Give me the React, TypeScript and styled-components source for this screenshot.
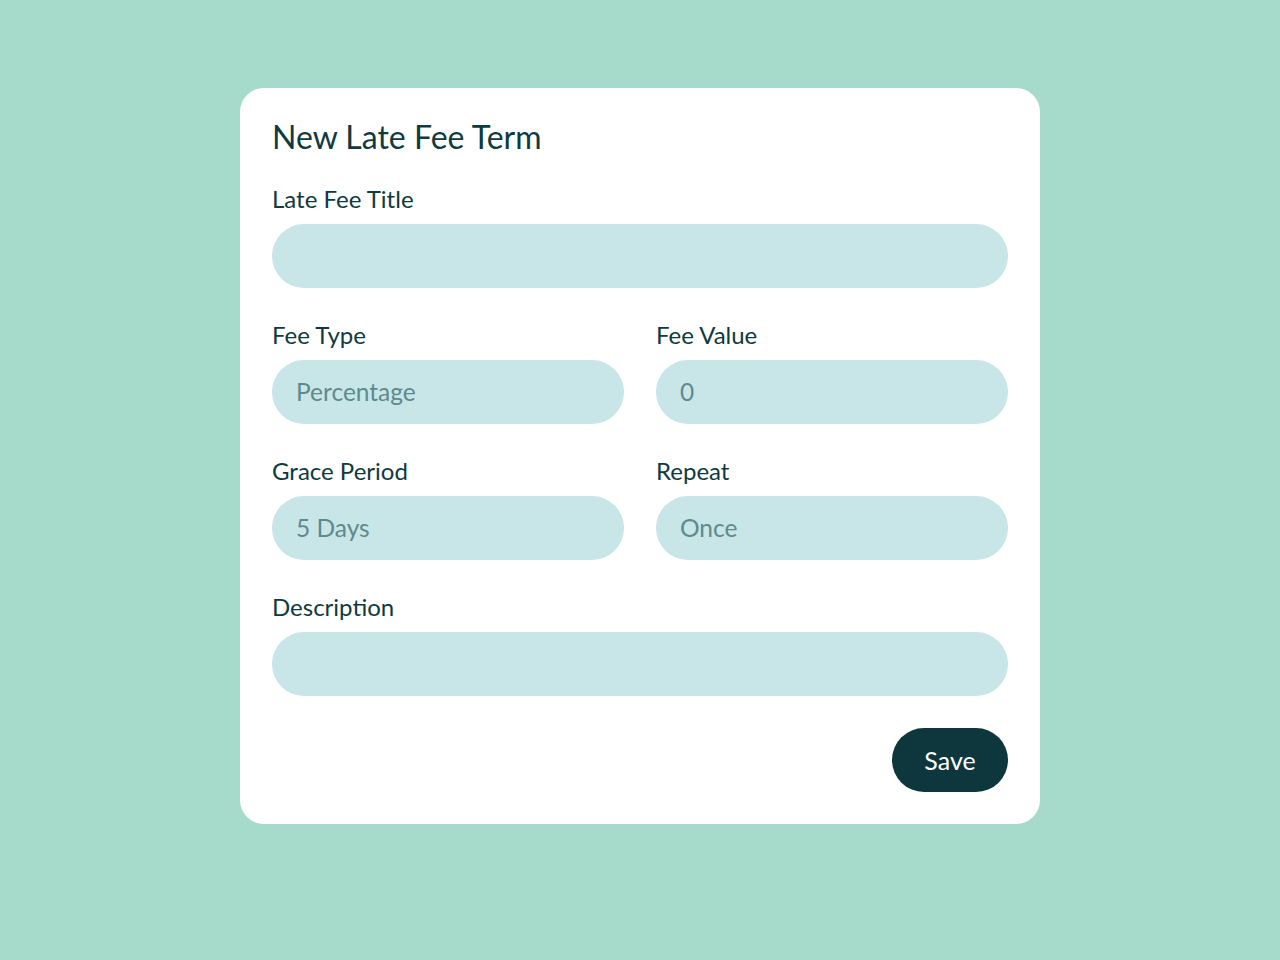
import styled, { createGlobalStyle } from 'styled-components';

const Global = createGlobalStyle`
  html, body {
    margin: 0;
    padding: 0;
    background: #a6dbcc;
    font-family: 'Lato', 'Noto Sans', sans-serif;
  }
`;

const Page = styled.div`
  min-height: 960px;
  display: flex;
  justify-content: center;
  padding-top: 88px;
  box-sizing: border-box;
`;

const Card = styled.div`
  width: 800px;
  height: 736px;
  box-sizing: border-box;
  background: #fff;
  border-radius: 24px;
  padding: 32px;
  color: #0f3a40;
`;

const Title = styled.h1`
  margin: 0 0 35px;
  font-size: 32px;
  font-weight: 400;
  line-height: 33px;
`;

const Form = styled.div`
  display: grid;
  grid-template-columns: 1fr 1fr;
  column-gap: 32px;
  row-gap: 36px;
`;

const Field = styled.label<{ $wide?: boolean }>`
  display: flex;
  flex-direction: column;
  gap: 12px;
  grid-column: ${(p) => (p.$wide ? '1 / -1' : 'auto')};
`;

const Label = styled.span`
  font-size: 24px;
  line-height: 22px;
  padding-bottom: 2px;
`;

const Input = styled.div`
  height: 64px;
  border-radius: 32px;
  background: #c8e5e8;
  padding: 0 24px 2px;
  box-sizing: border-box;
  display: flex;
  align-items: center;
  font-size: 24.5px;
  color: #5e8a8c;
`;

const Actions = styled.div`
  display: flex;
  justify-content: flex-end;
  margin-top: 32px;
`;

const SaveButton = styled.button`
  height: 64px;
  width: 116px;
  border: none;
  border-radius: 32px;
  padding-bottom: 2px;
  background: #0e363d;
  color: #fff;
  font-family: inherit;
  font-size: 25px;
`;

export default function App() {
  return (
    <>
      <Global />
      <Page>
        <Card>
          <Title>New Late Fee Term</Title>
          <Form>
            <Field $wide>
              <Label>Late Fee Title</Label>
              <Input />
            </Field>
            <Field>
              <Label>Fee Type</Label>
              <Input>Percentage</Input>
            </Field>
            <Field>
              <Label>Fee Value</Label>
              <Input>0</Input>
            </Field>
            <Field>
              <Label>Grace Period</Label>
              <Input>5 Days</Input>
            </Field>
            <Field>
              <Label>Repeat</Label>
              <Input>Once</Input>
            </Field>
            <Field $wide>
              <Label>Description</Label>
              <Input />
            </Field>
          </Form>
          <Actions>
            <SaveButton>Save</SaveButton>
          </Actions>
        </Card>
      </Page>
    </>
  );
}
